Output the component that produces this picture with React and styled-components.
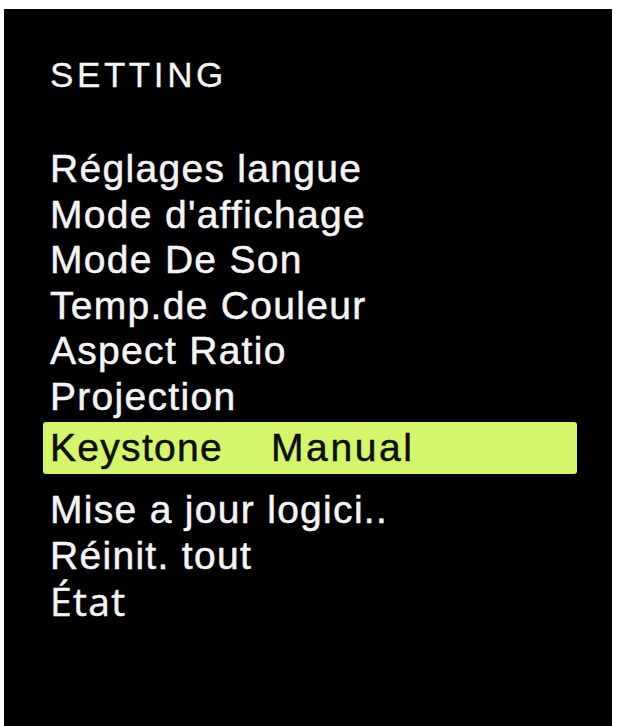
import React from "react";
import styled, { createGlobalStyle } from "styled-components";

const GlobalStyle = createGlobalStyle`
  html, body {
    margin: 0;
    padding: 0;
    background: #ffffff;
  }
  body {
    font-family: "Liberation Sans", Arial, sans-serif;
  }
`;

const Page = styled.div`
  padding: 9px 5px 0 4px;
  height: 726px;
  box-sizing: border-box;
  overflow: hidden;
`;

const Screen = styled.div`
  background: #000000;
  height: 717px;
  padding: 46px 35px 0 46px;
  box-sizing: border-box;
  display: flex;
  flex-direction: column;
`;

const Title = styled.div`
  color: #f4f4f4;
  font-size: 35px;
  line-height: 40px;
  letter-spacing: 3.6px;
  -webkit-text-stroke: 0.3px #f4f4f4;
  margin-bottom: 51px;
`;

const Menu = styled.div`
  display: flex;
  flex-direction: column;
`;

const Item = styled.div`
  color: ${(p) => (p.$active ? "#0d0d0d" : "#f4f4f4")};
  background: ${(p) => (p.$active ? "#d4f66b" : "transparent")};
  font-family: ${(p) =>
    p.$alt ? '"Open Sans", "Noto Sans", sans-serif' : '"Liberation Sans", Arial, sans-serif'};
  font-size: 39px;
  line-height: ${(p) => (p.$active ? "52px" : "45.5px")};
  letter-spacing: 1.3px;
  -webkit-text-stroke: 0.5px currentColor;
  white-space: nowrap;
  display: flex;
  gap: 48px;
  border-radius: 3px;
  margin: ${(p) => (p.$active ? "3px 0 13px -7px" : "0")};
  padding-left: ${(p) => (p.$active ? "7px" : "0")};
`;

const Value = styled.span`
  letter-spacing: 2.6px;
`;

const items = [
  { label: "Réglages langue" },
  { label: "Mode d'affichage" },
  { label: "Mode De Son" },
  { label: "Temp.de Couleur" },
  { label: "Aspect Ratio" },
  { label: "Projection" },
  { label: "Keystone", value: "Manual", active: true },
  { label: "Mise a jour logici.." },
  { label: "Réinit. tout" },
  { label: "État", alt: true },
];

export default function App() {
  return (
    <>
      <GlobalStyle />
      <Page>
        <Screen>
          <Title>SETTING</Title>
          <Menu>
            {items.map((item) => (
              <Item key={item.label} $active={item.active} $alt={item.alt}>
                <span>{item.label}</span>
                {item.value && <Value>{item.value}</Value>}
              </Item>
            ))}
          </Menu>
        </Screen>
      </Page>
    </>
  );
}
